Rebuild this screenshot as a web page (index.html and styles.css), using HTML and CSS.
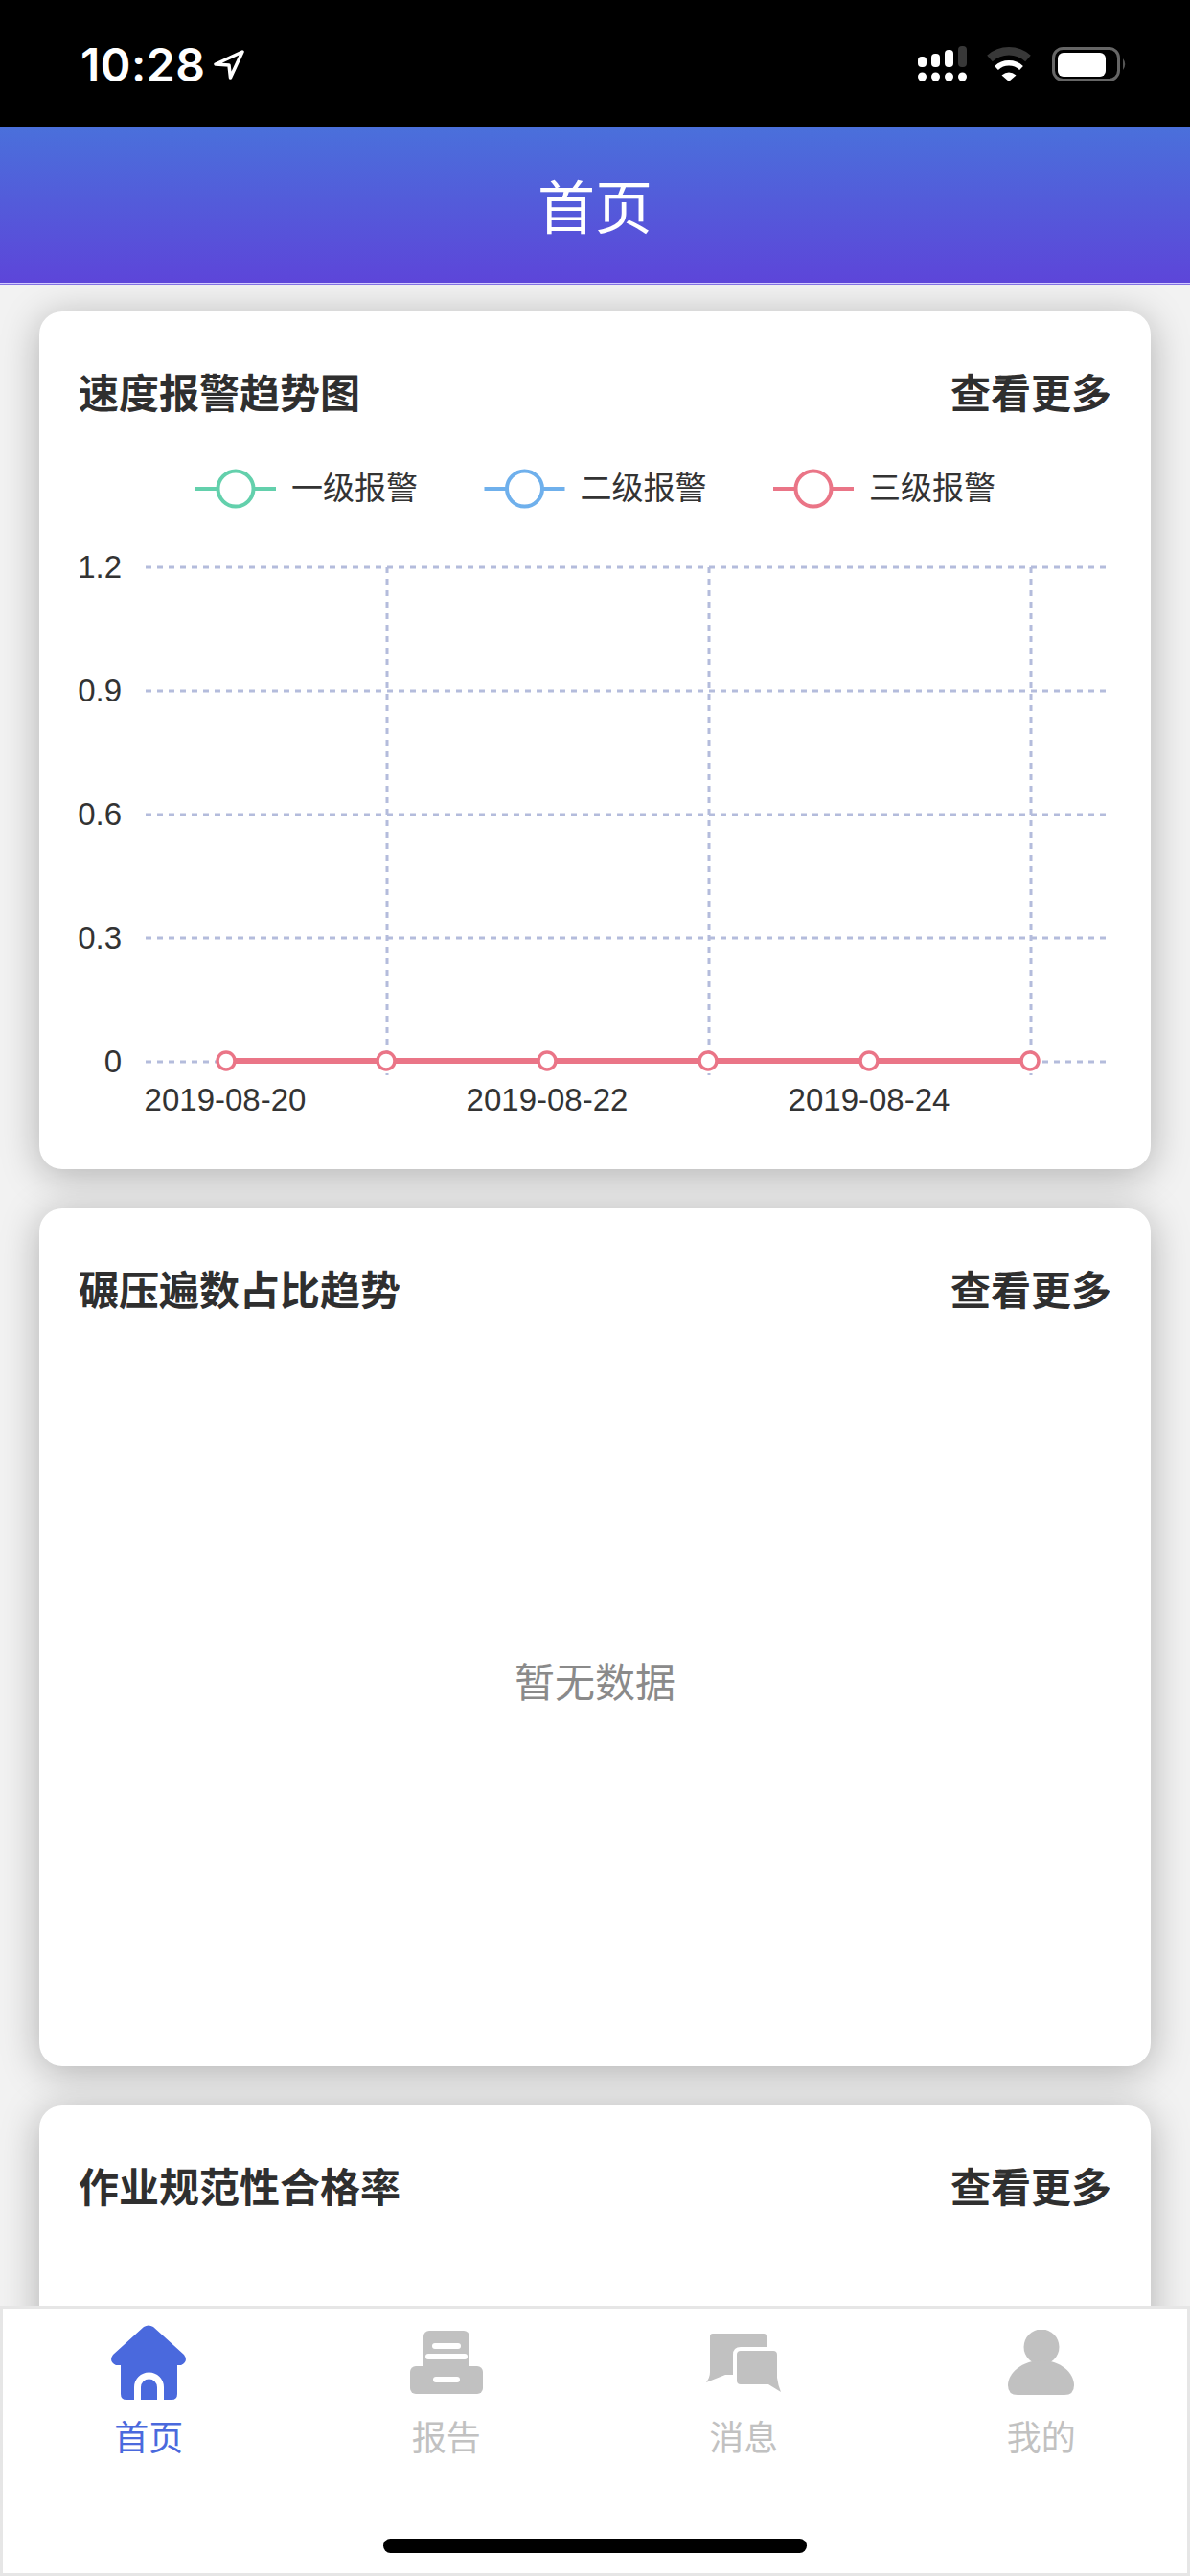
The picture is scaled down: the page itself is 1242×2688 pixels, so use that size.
FILE: index.html

```html
<!DOCTYPE html>
<html lang="zh-CN">
<head>
  <meta charset="UTF-8">
  <meta name="viewport" content="width=device-width, initial-scale=1.0">
  <title>首页</title>
  <link rel="stylesheet" href="styles.css">
</head>
<body>
  <div class="app">
    <div class="status-bar">
      <div class="status-left">
        <span class="time">10:28</span>
        <svg class="loc-arrow" width="32" height="31" viewBox="0 0 32 31"><path d="M30 2L2 15l14 1l1.500 13z" fill="none" stroke="#fff" stroke-width="3.500" stroke-linejoin="round"/></svg>
      </div>
      <div class="status-right">
        <svg width="56" height="38" viewBox="958 48 56 38">
          <rect x="958" y="59" width="9" height="11" rx="4" fill="#fff"/>
          <rect x="972" y="56" width="9" height="14" rx="4" fill="#fff"/>
          <rect x="986" y="52" width="9" height="18" rx="4" fill="#fff"/>
          <rect x="1000" y="48" width="9" height="22" rx="4" fill="#383838"/>
          <circle cx="962.5" cy="80" r="4.5" fill="#fff"/>
          <circle cx="976.5" cy="80" r="4.5" fill="#fff"/>
          <circle cx="990.5" cy="80" r="4.5" fill="#fff"/>
          <circle cx="1004.5" cy="80" r="4.5" fill="#fff"/>
        </svg>
        <svg width="48" height="36" viewBox="0 0 48 36" fill="none">
          <path d="M4 12A30 30 0 0 1 44 12" stroke="#383838" stroke-width="8.5"/>
          <path d="M11 22A19 19 0 0 1 37 22" stroke="#fff" stroke-width="5.5"/>
          <path d="M24 36L16.500 29.500Q24 23.500 31.500 29.500z" fill="#fff"/>
        </svg>
        <svg class="battery" width="79" height="36" viewBox="0 0 79 36">
          <rect x="1.500" y="1.500" width="68" height="33" rx="10" fill="none" stroke="#666" stroke-width="3"/>
          <rect x="6" y="6" width="50" height="25" rx="6" fill="#fff"/>
          <path d="M74 12q4.500 6 0 12z" fill="#555"/>
        </svg>
      </div>
    </div>

    <div class="nav-bar">首页</div>

    <div class="main">
      <div class="card">
        <div class="card-head">
          <span>速度报警趋势图</span>
          <span>查看更多</span>
        </div>
        <svg class="chart" width="1160" height="747" viewBox="41 473 1160 747">
          <g fill="none" stroke-width="4">
            <path d="M204 510h84" stroke="#63d0ac"/>
            <circle cx="246" cy="510" r="18.500" fill="#fff" stroke="#63d0ac"/>
            <path d="M505.500 510h84" stroke="#6fb0ec"/>
            <circle cx="547.500" cy="510" r="18.500" fill="#fff" stroke="#6fb0ec"/>
            <path d="M807 510h84" stroke="#ea7587"/>
            <circle cx="849" cy="510" r="18.500" fill="#fff" stroke="#ea7587"/>
          </g>
          <g class="legend-text">
            <text x="304" y="521">一级报警</text>
            <text x="605.500" y="521">二级报警</text>
            <text x="907" y="521">三级报警</text>
          </g>

          <g stroke="#b4bcdc" stroke-width="3" stroke-dasharray="6 6" fill="none">
            <path d="M152 592H1155"/>
            <path d="M152 721H1155"/>
            <path d="M152 850H1155"/>
            <path d="M152 979H1155"/>
            <path d="M152 1108H1155"/>
            <path d="M404 592V1122"/>
            <path d="M740 592V1122"/>
            <path d="M1076 592V1122"/>
          </g>

          <g class="axis-text" text-anchor="end">
            <text x="127" y="603">1.2</text>
            <text x="127" y="732">0.9</text>
            <text x="127" y="861">0.6</text>
            <text x="127" y="990">0.3</text>
            <text x="127" y="1119">0</text>
          </g>
          <g class="axis-text" text-anchor="middle">
            <text x="235" y="1159">2019-08-20</text>
            <text x="571" y="1159">2019-08-22</text>
            <text x="907" y="1159">2019-08-24</text>
          </g>

          <path d="M236 1107H1075" stroke="#ea7587" stroke-width="6" fill="none"/>
          <g fill="#fff" stroke="#ea7587" stroke-width="3.500">
            <circle cx="236" cy="1107" r="9"/>
            <circle cx="403" cy="1107" r="9"/>
            <circle cx="571" cy="1107" r="9"/>
            <circle cx="739" cy="1107" r="9"/>
            <circle cx="907" cy="1107" r="9"/>
            <circle cx="1075" cy="1107" r="9"/>
          </g>
        </svg>
      </div>

      <div class="card">
        <div class="card-head">
          <span>碾压遍数占比趋势</span>
          <span>查看更多</span>
        </div>
        <div class="empty">暂无数据</div>
      </div>

      <div class="card">
        <div class="card-head">
          <span>作业规范性合格率</span>
          <span>查看更多</span>
        </div>
      </div>
    </div>

    <div class="tab-bar">
      <div class="tab active">
        <div class="tab-icon">
          <svg width="78" height="78" viewBox="0 0 78 78">
            <path d="M34 2Q39-1 44 2L76 31Q81 38 73 42H69V72Q69 78 63 78H16Q10 78 10 72V42H5Q-3 38 2 31Z" fill="#4a69dd"/>
            <path d="M27.500 78V65A12 12 0 0 1 51.500 65V78" fill="none" stroke="#fff" stroke-width="7"/>
          </svg>
        </div>
        <span>首页</span>
      </div>
      <div class="tab">
        <div class="tab-icon">
          <svg width="76" height="66" viewBox="0 0 76 66">
            <rect x="14" width="48" height="44" rx="6" fill="#c1c1c1"/>
            <rect y="37" width="76" height="29" rx="6" fill="#c1c1c1"/>
            <path d="M26 16H50M19 27H57M27 51H49" stroke="#fff" stroke-width="6" stroke-linecap="round"/>
          </svg>
        </div>
        <span>报告</span>
      </div>
      <div class="tab">
        <div class="tab-icon">
          <svg width="78" height="61" viewBox="0 0 78 61">
            <path d="M7 0H60Q63 0 63 3V43H20L0 51Q4 46 4 40V3Q4 0 7 0Z" fill="#c1c1c1"/>
            <path d="M36 18H70Q74 18 74 22V46Q75 54 78 61L65 53H36Q32 53 32 49V22Q32 18 36 18Z" fill="#c1c1c1"/>
            <path d="M30 49V22Q30 16 36 16H63" fill="none" stroke="#fff" stroke-width="4"/>
          </svg>
        </div>
        <span>消息</span>
      </div>
      <div class="tab">
        <div class="tab-icon">
          <svg width="69" height="68" viewBox="0 0 69 68" fill="#c1c1c1">
            <circle cx="35" cy="18" r="18.500"/>
            <path d="M35 32C15 32 0 45 0 58Q0 68 10 68H59Q69 68 69 58C69 45 55 32 35 32Z"/>
          </svg>
        </div>
        <span>我的</span>
      </div>
      <div class="home-bar"></div>
    </div>
  </div>
</body>
</html>
```

FILE: styles.css

```css
* {
  box-sizing: border-box;
}

body {
  margin: 0;
  font-family: "Noto Sans CJK SC", "Liberation Sans", sans-serif;
  color: #333;
  background: #f2f2f2;
}

.app {
  display: flex;
  flex-direction: column;
  width: 1242px;
  height: 2688px;
  overflow: hidden;
}

.status-bar {
  display: flex;
  flex: none;
  justify-content: space-between;
  align-items: center;
  height: 132px;
  padding: 2px 65px 0 84px;
  background: #000;
  color: #fff;
}

.status-left {
  display: flex;
  align-items: center;
  gap: 9px;
}

.time {
  font-family: "Inter", sans-serif;
  font-size: 48px;
  font-weight: 600;
  letter-spacing: 0.5px;
}

.status-right {
  display: flex;
  align-items: center;
  gap: 15px;
}

.battery {
  margin-left: 6px;
}

.nav-bar {
  flex: none;
  height: 165px;
  border-bottom: 1px solid #8372e2;
  background: linear-gradient(#4a70db, #5d45d9);
  box-shadow: inset 0 -1px 0 #d3cbff;
  color: #fff;
  font-size: 60px;
  line-height: 161px;
  text-align: center;
}

.main {
  display: flex;
  flex: 1;
  flex-direction: column;
  gap: 41px;
  min-height: 0;
  padding: 28px 41px 0;
  overflow: hidden;
}

.card {
  display: flex;
  flex: none;
  flex-direction: column;
  height: 895px;
  background: #fff;
  border-radius: 24px;
  box-shadow: 0 6px 40px rgba(0, 0, 0, 0.28);
}

.card-head {
  display: flex;
  flex: none;
  justify-content: space-between;
  align-items: center;
  height: 164px;
  margin-bottom: 4px;
  padding: 0 41px;
  font-size: 42px;
  font-weight: 600;
  color: #2f2f2f;
}

.chart {
  display: block;
  margin-top: -20px;
}

.legend-text text {
  font-size: 33px;
  fill: #333;
}

.axis-text text {
  font-family: "Liberation Sans", sans-serif;
  font-size: 33px;
  fill: #333;
}

.empty {
  flex: 1;
  padding-top: 294px;
  font-size: 42px;
  line-height: 60px;
  color: #8a8a8a;
  text-align: center;
}

.tab-bar {
  position: relative;
  display: grid;
  flex: none;
  grid-template-columns: repeat(4, 1fr);
  height: 282px;
  padding-top: 20px;
  background: #fff;
  box-shadow: inset 0 0 0 3px #e6e6e6;
  color: #c1c1c1;
  font-size: 36px;
}

.tab {
  display: flex;
  flex-direction: column;
  align-items: center;
}

.tab-icon {
  display: flex;
  justify-content: center;
  align-items: center;
  height: 78px;
  margin-bottom: 13px;
}

.tab span {
  line-height: 48px;
}

.tab.active {
  color: #4a69dd;
}

.home-bar {
  position: absolute;
  bottom: 24px;
  left: 400px;
  width: 442px;
  height: 15px;
  background: #000;
  border-radius: 8px;
}
```
